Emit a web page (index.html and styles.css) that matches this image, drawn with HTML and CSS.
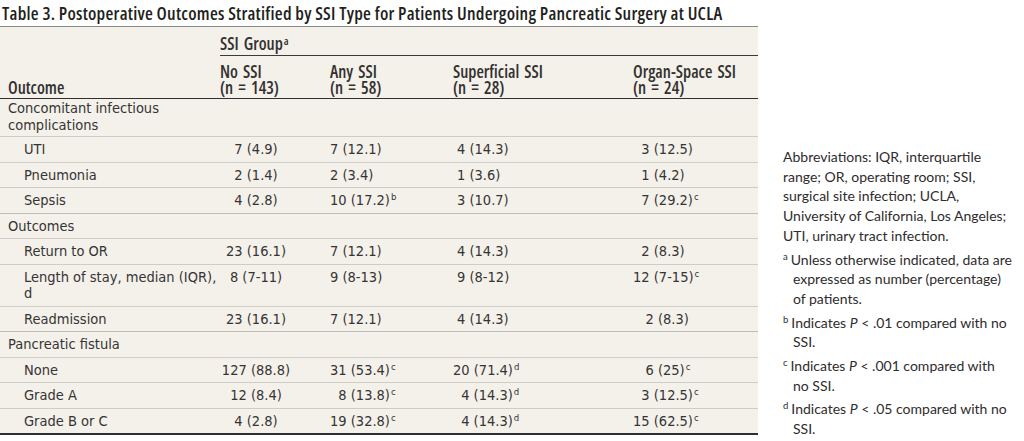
FILE: index.html
```html
<!DOCTYPE html>
<html lang="en">
<head>
<meta charset="utf-8">
<title>Table 3</title>
<link rel="stylesheet" href="styles.css">
</head>
<body>
<div class="page">
  <div class="main">
    <h1 class="title">Table 3. Postoperative Outcomes Stratified by SSI Type for Patients Undergoing Pancreatic Surgery at UCLA</h1>
    <table class="tbl">
      <colgroup>
        <col class="w1"><col class="w2"><col class="w3"><col class="w4"><col class="w5">
      </colgroup>
      <thead>
        <tr class="hrow1">
          <th></th>
          <th colspan="4" class="grp">SSI Group<sup>a</sup></th>
        </tr>
        <tr class="hrow2">
          <th class="lab">Outcome</th>
          <th>No SSI<br>(n = 143)</th>
          <th>Any SSI<br>(n = 58)</th>
          <th>Superficial SSI<br>(n = 28)</th>
          <th>Organ-Space SSI<br>(n = 24)</th>
        </tr>
      </thead>
      <tbody>
        <tr class="first"><td class="lab">Concomitant infectious<br>complications</td><td></td><td></td><td></td><td></td></tr>
        <tr><td class="sub">UTI</td><td class="c2">7 (4.9)</td><td class="c3">7 (12.1)</td><td class="c4">4 (14.3)</td><td class="c5">&#8199;3 (12.5)</td></tr>
        <tr><td class="sub">Pneumonia</td><td class="c2">2 (1.4)</td><td class="c3">2 (3.4)</td><td class="c4">1 (3.6)</td><td class="c5">&#8199;1 (4.2)</td></tr>
        <tr class="endsec"><td class="sub">Sepsis</td><td class="c2">4 (2.8)</td><td class="c3">10 (17.2)<sup>b</sup></td><td class="c4">3 (10.7)</td><td class="c5">&#8199;7 (29.2)<sup>c</sup></td></tr>
        <tr><td class="lab">Outcomes</td><td></td><td></td><td></td><td></td></tr>
        <tr><td class="sub">Return to OR</td><td class="c2">23 (16.1)</td><td class="c3">7 (12.1)</td><td class="c4">4 (14.3)</td><td class="c5">&#8199;2 (8.3)</td></tr>
        <tr><td class="sub">Length of stay, median (IQR),<br>d</td><td class="c2">8 (7-11)</td><td class="c3">9 (8-13)</td><td class="c4">9 (8-12)</td><td class="c5">12 (7-15)<sup>c</sup></td></tr>
        <tr class="endsec"><td class="sub">Readmission</td><td class="c2">23 (16.1)</td><td class="c3">7 (12.1)</td><td class="c4">4 (14.3)</td><td class="c5">&#8199;&#8200;2 (8.3)</td></tr>
        <tr><td class="lab">Pancreatic fistula</td><td></td><td></td><td></td><td></td></tr>
        <tr><td class="sub">None</td><td class="c2">127 (88.8)</td><td class="c3">31 (53.4)<sup>c</sup></td><td class="c4 pull">20 (71.4)<sup>d</sup></td><td class="c5">&#8199;&#8200;6 (25)<sup>c</sup></td></tr>
        <tr><td class="sub">Grade A</td><td class="c2">12 (8.4)</td><td class="c3">&#8199;8 (13.8)<sup>c</sup></td><td class="c4">&#8200;4 (14.3)<sup>d</sup></td><td class="c5">&#8199;3 (12.5)<sup>c</sup></td></tr>
        <tr class="last"><td class="sub">Grade B or C</td><td class="c2">4 (2.8)</td><td class="c3">19 (32.8)<sup>c</sup></td><td class="c4">&#8200;4 (14.3)<sup>d</sup></td><td class="c5">15 (62.5)<sup>c</sup></td></tr>
      </tbody>
    </table>
  </div>
  <aside class="notes">
    <p class="note">Abbreviations: IQR, interquartile range; OR, operating room; SSI, surgical site infection; UCLA, University of California, Los Angeles; UTI, urinary tract infection.</p>
    <p class="note fn"><sup>a</sup>Unless otherwise indicated, data are expressed as number (percentage)<br>of patients.</p>
    <p class="note fn"><sup>b</sup>Indicates <i>P</i> &lt; .01 compared with no SSI.</p>
    <p class="note fn"><sup>c</sup>Indicates <i>P</i> &lt; .001 compared with<br>no SSI.</p>
    <p class="note fn"><sup>d</sup>Indicates <i>P</i> &lt; .05 compared with no SSI.</p>
  </aside>
</div>
</body>
</html>
```
FILE: styles.css
```css
html, body {
  margin: 0;
  padding: 0;
  background: #ffffff;
}

.page {
  display: flex;
  align-items: flex-start;
}

.main {
  width: 758px;
  flex: none;
}

.title {
  margin: 0;
  padding: 3px 0 0 2px;
  height: 24px;
  box-sizing: border-box;
  font-family: "Open Sans", sans-serif;
  font-stretch: 75%;
  font-weight: 600;
  font-size: 18px;
  line-height: 20px;
  color: #231f20;
  white-space: nowrap;
  letter-spacing: 0.25px;
}

.tbl {
  width: 758px;
  table-layout: fixed;
  border-collapse: collapse;
  background: #f3f1ea;
  border-top: 1px solid #8a8a86;
  font-family: "DejaVu Sans", sans-serif;
  font-stretch: condensed;
  font-size: 14.5px;
  color: #363434;
  margin-top: 2px;
}

.w1 { width: 220px; }
.w2 { width: 110px; }
.w3 { width: 123px; }
.w4 { width: 180px; }
.w5 { width: 125px; }

.tbl th {
  font-family: "Open Sans", sans-serif;
  font-stretch: 75%;
  font-weight: 600;
  font-size: 17px;
  text-align: left;
  vertical-align: bottom;
  padding: 0;
  line-height: 16px;
  word-spacing: 2px;
  color: #333131;
}

.hrow1 th {
  height: 29px;
  padding-bottom: 3px;
  box-sizing: border-box;
}

.grp {
  border-bottom: 1px solid #3a3a3a;
}

.hrow2 th {
  height: 40px;
  padding-bottom: 2px;
  border-bottom: 1.5px solid #2f2f2f;
}

.hrow2 th.lab {
  padding-left: 8px;
}

.tbl td {
  padding: 4px 0 4px 0;
  line-height: 16.5px;
  border-bottom: 1px solid #cfcdc6;
  vertical-align: top;
  white-space: nowrap;
}

.tbl tr.first td {
  padding-top: 1px;
  padding-bottom: 3px;
}

.tbl td.lab {
  padding-left: 8px;
}

.tbl td.sub {
  padding-left: 24px;
}

.tbl tr.endsec td {
  border-bottom-color: #bfbdb6;
}

.tbl tr.last td {
  border-bottom: 2px solid #2f2f2f;
}

.c2 {
  text-align: center;
  padding-right: 38px !important;
}

.c3 {
  padding-left: 0 !important;
}

.c4 {
  padding-left: 4px !important;
}

.c4.pull {
  padding-left: 0 !important;
}

.c5 {
  padding-left: 0 !important;
}

.tbl sup {
  font-size: 9.5px;
  line-height: 0;
  vertical-align: 5px;
  margin-left: 1px;
}

.tbl th sup {
  font-size: 11px;
}

.notes {
  margin-left: 25px;
  padding-top: 147px;
  width: 238px;
  flex: none;
  font-family: "Lato", sans-serif;
  font-size: 14px;
  line-height: 19.7px;
  color: #2e2c2d;
}

.note {
  margin: 0 0 4px 0;
}

.note.fn {
  padding-left: 10px;
  text-indent: -10px;
}

.note sup {
  font-size: 9.5px;
  line-height: 0;
  vertical-align: 5px;
  margin-right: 3px;
}
```
